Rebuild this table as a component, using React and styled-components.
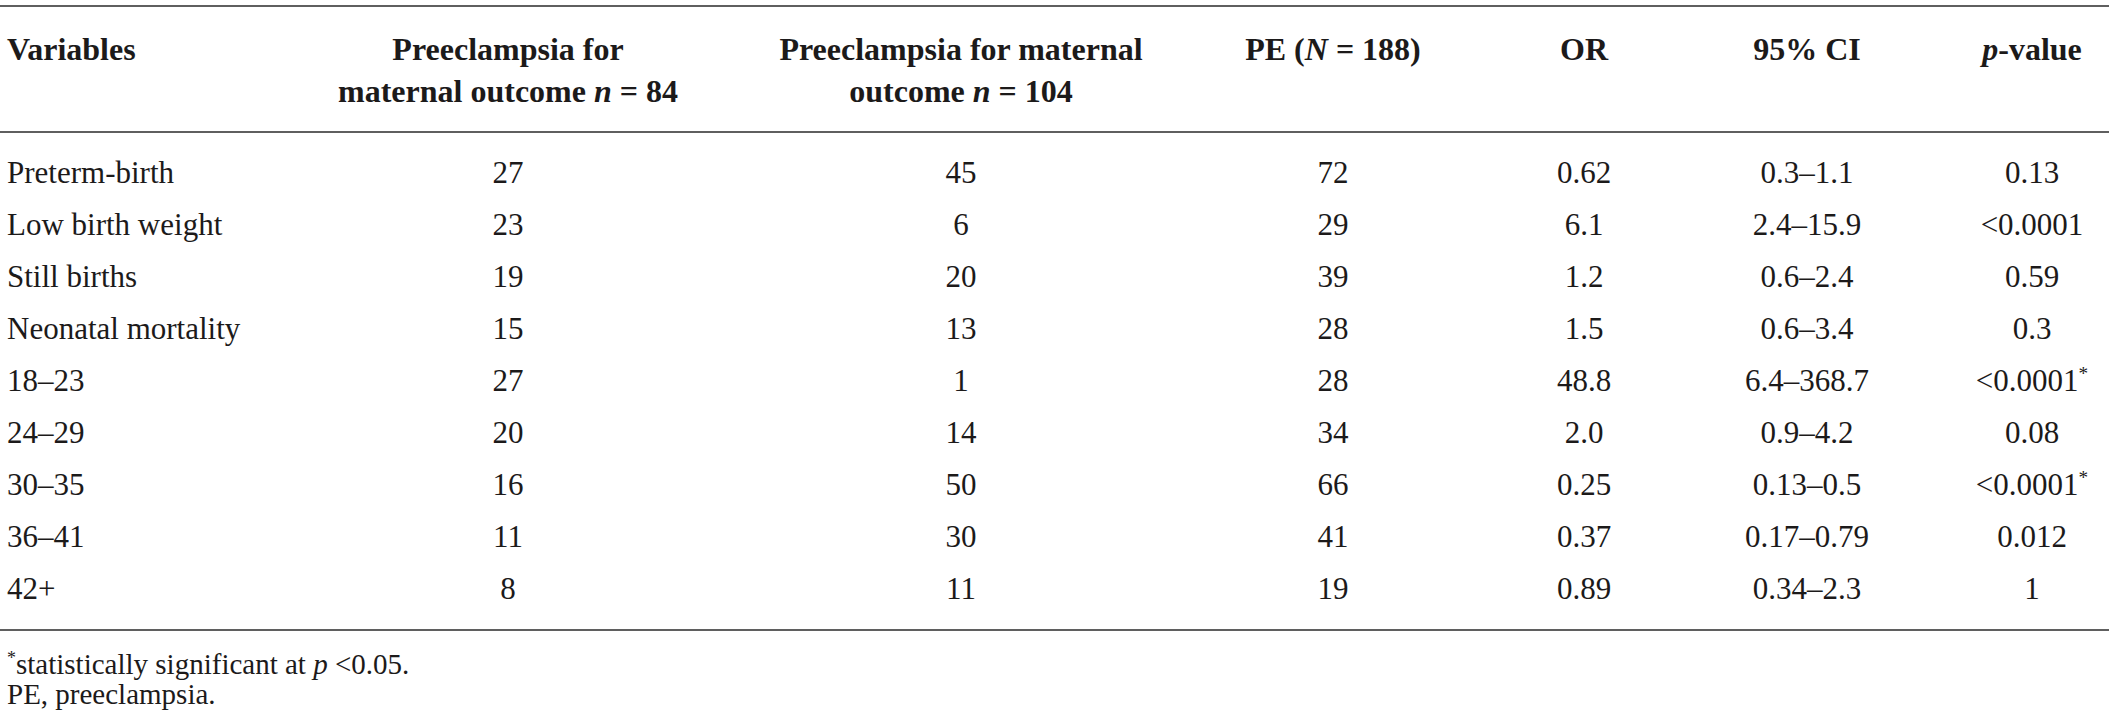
import React from "react";
import styled, { createGlobalStyle } from "styled-components";

const GlobalStyle = createGlobalStyle`
  html, body {
    margin: 0;
    padding: 0;
    background: #ffffff;
  }
  body {
    font-family: "Liberation Serif", "Times New Roman", serif;
    color: #1c1a1a;
  }
`;

// label column, then each data column with the spacer that follows it
const COLS =
  "340px 336px 105px 360px 92px 200px 71px 160px 53px 180px 60px 150px";
const TRACK = [1, 2, 4, 6, 8, 10, 12];

const Page = styled.div`
  width: 2114px;
  height: 725px;
  padding-top: 5px;
  box-sizing: border-box;
`;

const Table = styled.div`
  width: 2109px;
  border-top: 2px solid #5f5f5f;
  border-bottom: 2px solid #5f5f5f;
`;

const HeadRow = styled.div`
  display: grid;
  grid-template-columns: ${COLS};
  padding: 21px 0 19px;
  border-bottom: 2px solid #5f5f5f;
  font-weight: 700;
  font-size: 32px;
  line-height: 42px;
`;

const Body = styled.div`
  padding: 14px 0 14px;
`;

const Row = styled.div`
  display: grid;
  grid-template-columns: ${COLS};
  font-size: 31px;
  line-height: 52px;
`;

const Cell = styled.div`
  grid-column: ${(p) => TRACK[p.$col]};
  display: flex;
  justify-content: ${(p) => (p.$col === 0 ? "flex-start" : "center")};
  padding-left: ${(p) => (p.$col === 0 ? "7px" : "0")};
  white-space: nowrap;
  text-align: center;
`;

const Sup = styled.sup`
  font-size: 0.62em;
  line-height: 0;
  vertical-align: 0.55em;
`;

const Notes = styled.div`
  padding: 18px 0 0 7px;
  font-size: 29px;
  line-height: 30px;
`;

const Note = styled.div``;

const rows = [
  ["Preterm-birth", "27", "45", "72", "0.62", "0.3–1.1", "0.13"],
  ["Low birth weight", "23", "6", "29", "6.1", "2.4–15.9", "<0.0001"],
  ["Still births", "19", "20", "39", "1.2", "0.6–2.4", "0.59"],
  ["Neonatal mortality", "15", "13", "28", "1.5", "0.6–3.4", "0.3"],
  ["18–23", "27", "1", "28", "48.8", "6.4–368.7", "<0.0001*"],
  ["24–29", "20", "14", "34", "2.0", "0.9–4.2", "0.08"],
  ["30–35", "16", "50", "66", "0.25", "0.13–0.5", "<0.0001*"],
  ["36–41", "11", "30", "41", "0.37", "0.17–0.79", "0.012"],
  ["42+", "8", "11", "19", "0.89", "0.34–2.3", "1"],
];

function renderValue(v) {
  if (v.endsWith("*")) {
    return (
      <span>
        {v.slice(0, -1)}
        <Sup>*</Sup>
      </span>
    );
  }
  return <span>{v}</span>;
}

export default function App() {
  return (
    <Page>
      <GlobalStyle />
      <Table>
        <HeadRow>
          <Cell $col={0}>Variables</Cell>
          <Cell $col={1}>
            <span>
              Preeclampsia for
              <br />
              maternal outcome <i>n</i> = 84
            </span>
          </Cell>
          <Cell $col={2}>
            <span>
              Preeclampsia for maternal
              <br />
              outcome <i>n</i> = 104
            </span>
          </Cell>
          <Cell $col={3}>
            <span>
              PE (<i>N</i> = 188)
            </span>
          </Cell>
          <Cell $col={4}>OR</Cell>
          <Cell $col={5}>95% CI</Cell>
          <Cell $col={6}>
            <span>
              <i>p</i>-value
            </span>
          </Cell>
        </HeadRow>
        <Body>
          {rows.map((r) => (
            <Row key={r[0]}>
              {r.map((v, i) => (
                <Cell key={i} $col={i}>
                  {i === 0 ? v : renderValue(v)}
                </Cell>
              ))}
            </Row>
          ))}
        </Body>
      </Table>
      <Notes>
        <Note>
          <Sup>*</Sup>statistically significant at <i>p</i> &lt;0.05.
        </Note>
        <Note>PE, preeclampsia.</Note>
      </Notes>
    </Page>
  );
}
